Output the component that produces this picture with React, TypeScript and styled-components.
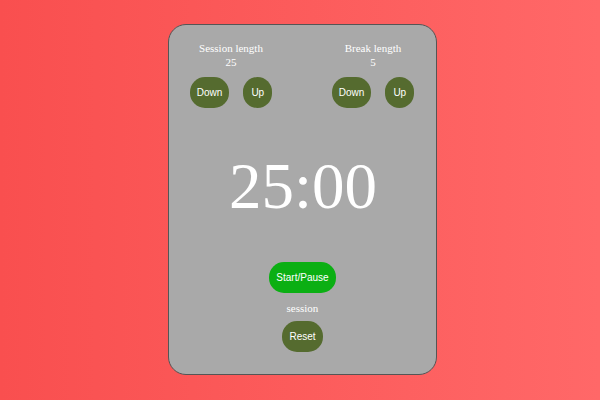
import React, { useState } from 'react';
import styled, { createGlobalStyle } from 'styled-components';

const GlobalStyle = createGlobalStyle`
  html, body {
    margin: 0;
    padding: 0;
  }
  body {
    width: 600px;
    height: 400px;
    overflow: hidden;
    background: linear-gradient(to right, #f94f4f, #ff6868);
    font-family: "Liberation Serif", "Times New Roman", serif;
  }
`;

const Page = styled.div`
  display: flex;
  justify-content: center;
  padding: 24px 0 0 5px;
`;

const Card = styled.div`
  box-sizing: border-box;
  width: 269px;
  height: 351px;
  background: #a9a9a9;
  border: 1px solid #555;
  border-radius: 18px;
  display: flex;
  flex-direction: column;
  align-items: center;
  color: #fff;
`;

const Settings = styled.div`
  display: flex;
  justify-content: center;
  gap: 58px;
  margin-top: 16px;
  margin-left: -1px;
`;

const Setting = styled.div`
  display: flex;
  flex-direction: column;
  align-items: center;
  width: 84px;
  font-size: 11px;
  line-height: 14px;
`;

const ButtonRow = styled.div`
  display: flex;
  gap: 14px;
  margin-top: 8px;
`;

const Btn = styled.button<{ $green?: boolean }>`
  height: 31px;
  min-width: 29px;
  padding: 0 7px;
  border: none;
  border-radius: 15px;
  background: ${(p) => (p.$green ? '#0baf13' : '#556b2f')};
  color: #fff;
  font-family: "Liberation Sans", Arial, sans-serif;
  font-size: 10px;
  cursor: pointer;
`;

const Timer = styled.div`
  margin-top: 46px;
  font-size: 65px;
  line-height: 65px;
  margin-left: 1px;
`;

const Label = styled.div`
  font-size: 11px;
  line-height: 14px;
  margin: 8px 0 6px;
`;

const Controls = styled.div`
  display: flex;
  flex-direction: column;
  align-items: center;
  margin-top: 43px;
`;

export default function App() {
  const [session, setSession] = useState(25);
  const [brk, setBrk] = useState(5);

  return (
    <>
      <GlobalStyle />
      <Page>
        <Card>
          <Settings>
            <Setting>
              <div>Session length</div>
              <div>{session}</div>
              <ButtonRow>
                <Btn onClick={() => setSession(Math.max(1, session - 1))}>Down</Btn>
                <Btn onClick={() => setSession(session + 1)}>Up</Btn>
              </ButtonRow>
            </Setting>
            <Setting>
              <div>Break length</div>
              <div>{brk}</div>
              <ButtonRow>
                <Btn onClick={() => setBrk(Math.max(1, brk - 1))}>Down</Btn>
                <Btn onClick={() => setBrk(brk + 1)}>Up</Btn>
              </ButtonRow>
            </Setting>
          </Settings>
          <Timer>{String(session).padStart(2, '0')}:00</Timer>
          <Controls>
            <Btn $green>Start/Pause</Btn>
            <Label>session</Label>
            <Btn>Reset</Btn>
          </Controls>
        </Card>
      </Page>
    </>
  );
}
